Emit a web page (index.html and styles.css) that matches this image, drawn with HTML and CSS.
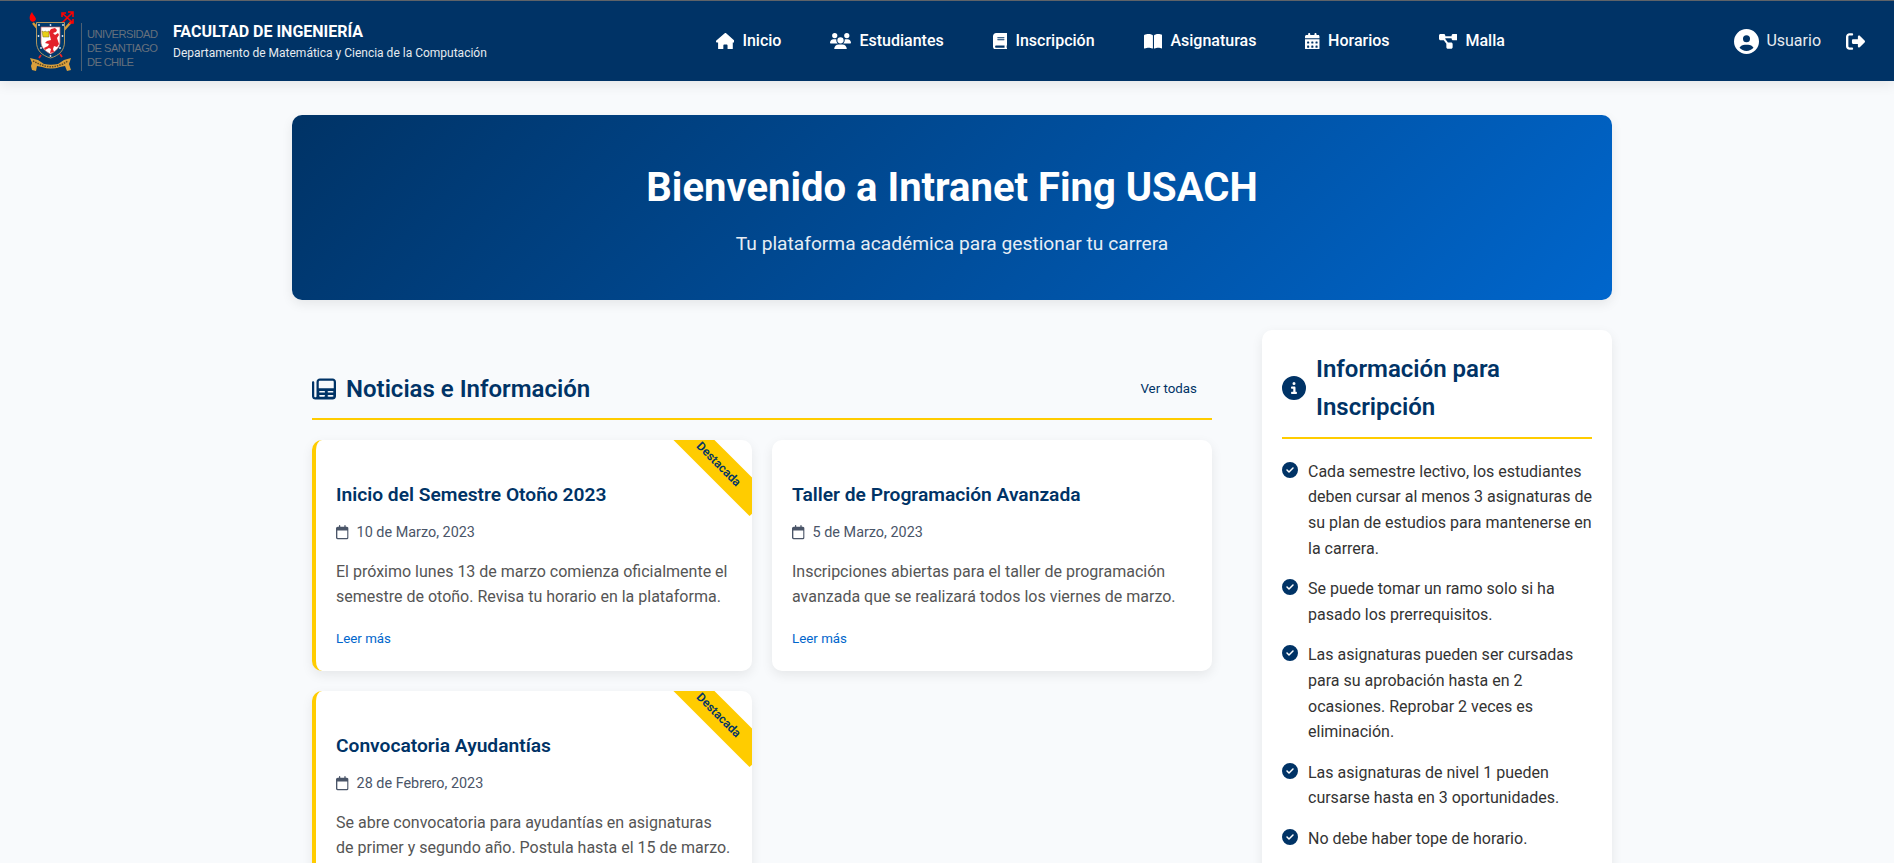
FILE: index.html
```html
<!DOCTYPE html>
<html lang="es">
<head>
<meta charset="utf-8">
<title>Intranet Fing USACH</title>
<link rel="stylesheet" href="styles.css">
</head>
<body>
<svg class="sprite" aria-hidden="true">
  <symbol id="home" viewBox="0 0 576 512"><path d="M575.8 255.5c0 18-15 32.1-32 32.1h-32l.7 160.2c0 2.7-.2 5.4-.5 8.1V472c0 22.1-17.9 40-40 40H392c-22.1 0-40-17.9-40-40V384c0-17.7-14.3-32-32-32H256c-17.7 0-32 14.3-32 32v88c0 22.1-17.9 40-40 40H104c-22.1 0-40-17.9-40-40V287.6H32c-18 0-32-14-32-32.1c0-9 3-17 10-24L266.4 8c7-7 15-8 22-8s15 2 21 7L564.8 231.5c8 7 12 15 11 24z"/></symbol>
  <symbol id="users" viewBox="0 0 640 512"><path d="M144 0a80 80 0 1 1 0 160A80 80 0 1 1 144 0zM512 0a80 80 0 1 1 0 160A80 80 0 1 1 512 0zM0 298.7C0 239.8 47.8 192 106.7 192h42.7c15.9 0 31 3.5 44.6 9.7c-1.3 7.2-1.9 14.7-1.9 22.3c0 38.2 16.8 72.5 43.3 96H21.3C9.6 320 0 310.4 0 298.7zM404.6 320c26.6-23.5 43.3-57.8 43.3-96c0-7.6-.7-15-1.9-22.3c13.6-6.3 28.7-9.7 44.6-9.7h42.7C592.2 192 640 239.8 640 298.7c0 11.8-9.6 21.3-21.3 21.3H404.6zM224 224a96 96 0 1 1 192 0 96 96 0 1 1 -192 0zM128 485.3C128 411.7 187.7 352 261.3 352H378.7C452.3 352 512 411.7 512 485.3c0 14.7-11.9 26.7-26.7 26.7H154.7c-14.7 0-26.7-11.9-26.7-26.7z"/></symbol>
  <symbol id="book" viewBox="0 0 448 512"><path d="M96 0C43 0 0 43 0 96V416c0 53 43 96 96 96H416c17.7 0 32-14.3 32-32s-14.3-32-32-32V384c17.7 0 32-14.3 32-32V32c0-17.7-14.3-32-32-32H96zm0 384H352v64H96c-17.7 0-32-14.3-32-32s14.3-32 32-32zm32-240c0-8.8 7.2-16 16-16H336c8.8 0 16 7.2 16 16s-7.2 16-16 16H144c-8.8 0-16-7.2-16-16zm16 48H336c8.8 0 16 7.2 16 16s-7.2 16-16 16H144c-8.8 0-16-7.2-16-16s7.2-16 16-16z"/></symbol>
  <symbol id="book-open" viewBox="0 0 576 512"><path d="M249.6 471.5c10.8 3.8 22.4-4.1 22.4-15.5V78.6c0-4.2-1.6-8.4-5-11C247.4 52 202.4 32 144 32C93.5 32 46.3 45.3 18.1 56.1C6.8 60.5 0 71.7 0 83.8V454.1c0 11.9 12.8 20.2 24.1 16.5C55.6 460.1 105.5 448 144 448c33.9 0 79 14 105.6 23.5zm76.8 0C353 462 398.1 448 432 448c38.5 0 88.4 12.1 119.9 22.6c11.3 3.8 24.1-4.6 24.1-16.5V83.8c0-12.1-6.8-23.3-18.1-27.6C529.7 45.3 482.5 32 432 32c-58.4 0-103.4 20-123 35.6c-3.3 2.6-5 6.8-5 11V456c0 11.4 11.7 19.3 22.4 15.5z"/></symbol>
  <symbol id="calendar-days" viewBox="0 0 448 512"><path d="M128 0c17.7 0 32 14.3 32 32V64H288V32c0-17.7 14.3-32 32-32s32 14.3 32 32V64h48c26.5 0 48 21.5 48 48v48H0V112C0 85.5 21.5 64 48 64H96V32c0-17.7 14.3-32 32-32z"/><path fill-rule="evenodd" d="M0 192H448V464c0 26.5-21.5 48-48 48H48c-26.5 0-48-21.5-48-48zM80 256q-16 0-16 16v32q0 16 16 16h32q16 0 16-16v-32q0-16-16-16zM208 256q-16 0-16 16v32q0 16 16 16h32q16 0 16-16v-32q0-16-16-16zM336 256q-16 0-16 16v32q0 16 16 16h32q16 0 16-16v-32q0-16-16-16zM80 384q-16 0-16 16v32q0 16 16 16h32q16 0 16-16v-32q0-16-16-16zM208 384q-16 0-16 16v32q0 16 16 16h32q16 0 16-16v-32q0-16-16-16zM336 384q-16 0-16 16v32q0 16 16 16h32q16 0 16-16v-32q0-16-16-16z"/></symbol>
  <symbol id="diagram" viewBox="0 0 576 512"><path d="M0 80C0 53.5 21.5 32 48 32h96c26.5 0 48 21.5 48 48V96H384V80c0-26.5 21.5-48 48-48h96c26.5 0 48 21.5 48 48v96c0 26.5-21.5 48-48 48H432c-26.5 0-48-21.5-48-48V160H192v16c0 1.7-.1 3.4-.3 5L272 288h96c26.5 0 48 21.5 48 48v96c0 26.5-21.5 48-48 48H272c-26.5 0-48-21.5-48-48V336c0-1.7 .1-3.4 .3-5L144 224H48c-26.5 0-48-21.5-48-48V80z"/></symbol>
  <symbol id="user-circle" viewBox="0 0 512 512"><path d="M399 384.2C376.9 345.8 335.4 320 288 320H224c-47.4 0-88.9 25.8-111 64.2c35.2 39.2 86.2 63.8 143 63.8s107.8-24.7 143-63.8zM0 256a256 256 0 1 1 512 0A256 256 0 1 1 0 256zm256 16a72 72 0 1 0 0-144 72 72 0 1 0 0 144z"/></symbol>
  <symbol id="sign-out" viewBox="0 0 512 512"><path d="M377.9 105.9L500.7 228.7c7.2 7.2 11.3 17.1 11.3 27.3s-4.1 20.1-11.3 27.3L377.9 406.1c-6.4 6.4-15 9.9-24 9.9c-18.7 0-33.9-15.2-33.9-33.9l0-62.1-128 0c-17.7 0-32-14.3-32-32l0-64c0-17.7 14.3-32 32-32l128 0 0-62.1c0-18.7 15.2-33.9 33.9-33.9c9 0 17.6 3.6 24 9.9zM160 96L96 96c-17.7 0-32 14.3-32 32l0 256c0 17.7 14.3 32 32 32l64 0c17.7 0 32 14.3 32 32s-14.3 32-32 32l-64 0c-53 0-96-43-96-96L0 128C0 75 43 32 96 32l64 0c17.7 0 32 14.3 32 32s-14.3 32-32 32z"/></symbol>
  <symbol id="newspaper" viewBox="0 0 512 512"><path fill-rule="evenodd" d="M168 32H440c39.800 0 72 32.200 72 72V408c0 39.800-32.200 72-72 72H72c-39.800 0-72-32.200-72-72V112C0 98.700 10.700 88 24 88s24 10.700 24 24V408c0 13.300 10.700 24 24 24s24-10.700 24-24V104c0-39.800 32.200-72 72-72zM168 80c-13.300 0-24 10.700-24 24V240H464V104c0-13.300-10.700-24-24-24zM176 296c-13 0-24 6-24 18s11 18 24 18h82c13 0 22-6 22-18s-9-18-22-18zM354 296c-13 0-22 6-22 18s9 18 22 18h82c13 0 22-6 22-18s-9-18-22-18zM176 382c-13 0-24 6-24 18s11 20 24 20h82c13 0 22-8 22-20s-9-18-22-18zM354 382c-13 0-22 6-22 18s9 20 22 20h82c13 0 22-8 22-20s-9-18-22-18z"/></symbol>
  <symbol id="info" viewBox="0 0 512 512"><path d="M256 512A256 256 0 1 0 256 0a256 256 0 1 0 0 512zM216 336h24V272H216c-13.300 0-24-10.700-24-24s10.700-24 24-24h48c13.300 0 24 10.700 24 24v88h8c13.300 0 24 10.700 24 24s-10.700 24-24 24H216c-13.300 0-24-10.700-24-24s10.700-24 24-24zm40-208a32 32 0 1 1 0 64 32 32 0 1 1 0-64z"/></symbol>
  <symbol id="check" viewBox="0 0 512 512"><path d="M256 512A256 256 0 1 0 256 0a256 256 0 1 0 0 512zM369 209L241 337c-9.400 9.400-24.600 9.400-33.900 0l-64-64c-9.400-9.400-9.400-24.600 0-33.900s24.600-9.400 33.900 0l47 47L335 175c9.400-9.400 24.600-9.400 33.900 0s9.400 24.600 0 33.900z"/></symbol>
  <symbol id="calendar" viewBox="0 0 448 512"><path d="M152 24c0-13.300-10.700-24-24-24s-24 10.700-24 24V64H64C28.700 64 0 92.700 0 128v320c0 35.300 28.700 64 64 64H384c35.300 0 64-28.700 64-64V128c0-35.300-28.700-64-64-64H344V24c0-13.300-10.700-24-24-24s-24 10.700-24 24V64H152V24zM48 192H400V448c0 8.800-7.200 16-16 16H64c-8.800 0-16-7.200-16-16V192z"/></symbol>
</svg>

<header class="topbar">
  <div class="brand">
    <svg class="logo" width="130" height="60" viewBox="0 0 130 60">
      <path d="M5 12l5 6M43 11l-8 9" stroke="#d99a35" stroke-width="2.400"/>
      <path d="M2 9c-1-3 0-5 2-8 1 3 3 4 4 7-1 3-4 4-6 1z" fill="#f00"/>
      <path d="M35 3l9 8M44 2l-9 9M40 1h5v5M34 6V2h4M35 11l-2 1M41 12h4V8" fill="none" stroke="#f00" stroke-width="1.600"/>
      <path d="M8.500 11.500h28V31c0 8-5 13.500-14 16-9-2.500-14-8-14-16z" fill="#003a6c" stroke="#b0965f"/>
      <path d="M13 16h19v15c0 5-3.500 9-9.500 12C16.500 40 13 36 13 31z" fill="#fff" stroke="#c66" stroke-width=".7"/>
      <path d="M14 20l2 1 1-1 2 1 2-1v6h-6z" fill="#e9cf16" stroke="#776a1c" stroke-width=".5"/>
      <path d="M21 21l2-3 4-1 2 2-1 2-3 1 2 2 3-2 1 2-2 3 1 3 1 3-2 3-3-1-1 3 1 3-4 1 1-4-2-1-4 2-1-2 4-2 1-2-4-1 2-2 4-1z" fill="#e3202b"/>
      <g fill="#dcecff"><circle cx="11" cy="14" r=".9"/><circle cx="22.500" cy="14" r=".9"/><circle cx="35" cy="14" r=".9"/><circle cx="10.500" cy="25" r=".9"/><circle cx="34.500" cy="25" r=".9"/><circle cx="13" cy="37" r=".9"/><circle cx="32" cy="37" r=".9"/><circle cx="22.500" cy="45" r=".9"/></g>
      <path d="M11 47l2-3M32 43l2 3" stroke="#e22" stroke-width="1.800"/>
      <path d="M2 47l8 2 6 4c5 1 9 1 14 0l6-4 7-2-2 6 2 6-4 1-2-5-5 1c-6 2-12 2-18 0l-5-1-1 5-4-1-1-4 1-3z" fill="#dba03c"/>
      <path d="M5 50l6 3 6 2c4 1 8 1 12 0l6-2 5-3" fill="none" stroke="#5b4a28" stroke-width="1.500" stroke-dasharray="1.500 1"/>
      <path d="M53.500 12v48" stroke="#4d6073"/>
      <g class="logo-text"><text x="59" y="27" textLength="71">UNIVERSIDAD</text><text x="59" y="41" textLength="71">DE SANTIAGO</text><text x="59" y="55" textLength="47">DE CHILE</text></g>
    </svg>
    <div class="brand-text">
      <div class="faculty">FACULTAD DE INGENIERÍA</div>
      <div class="department">Departamento de Matemática y Ciencia de la Computación</div>
    </div>
  </div>
  <nav class="menu">
    <a><svg class="wide"><use href="#home"/></svg>Inicio</a>
    <a><svg class="widest"><use href="#users"/></svg>Estudiantes</a>
    <a><svg class="narrow"><use href="#book"/></svg>Inscripción</a>
    <a><svg class="wide"><use href="#book-open"/></svg>Asignaturas</a>
    <a><svg class="narrow"><use href="#calendar-days"/></svg>Horarios</a>
    <a><svg class="wide"><use href="#diagram"/></svg>Malla</a>
  </nav>
  <div class="account">
    <svg class="avatar"><use href="#user-circle"/></svg><span>Usuario</span>
    <svg class="exit"><use href="#sign-out"/></svg>
  </div>
</header>

<main class="page">
  <section class="hero">
    <h1>Bienvenido a Intranet Fing USACH</h1>
    <p>Tu plataforma académica para gestionar tu carrera</p>
  </section>
  <div class="columns">
    <section class="news">
      <div class="section-head">
        <h2><svg class="h-icon"><use href="#newspaper"/></svg>Noticias e Información</h2>
        <a class="all">Ver todas</a>
      </div>
      <div class="cards">
        <article class="card featured">
          <span class="ribbon">Destacada</span>
          <h3>Inicio del Semestre Otoño 2023</h3>
          <div class="date"><svg><use href="#calendar"/></svg>10 de Marzo, 2023</div>
          <p>El próximo lunes 13 de marzo comienza oficialmente el semestre de otoño. Revisa tu horario en la plataforma.</p>
          <a class="more">Leer más</a>
        </article>
        <article class="card">
          <h3>Taller de Programación Avanzada</h3>
          <div class="date"><svg><use href="#calendar"/></svg>5 de Marzo, 2023</div>
          <p>Inscripciones abiertas para el taller de programación avanzada que se realizará todos los viernes de marzo.</p>
          <a class="more">Leer más</a>
        </article>
        <article class="card featured">
          <span class="ribbon">Destacada</span>
          <h3>Convocatoria Ayudantías</h3>
          <div class="date"><svg><use href="#calendar"/></svg>28 de Febrero, 2023</div>
          <p>Se abre convocatoria para ayudantías en asignaturas de primer y segundo año. Postula hasta el 15 de marzo.</p>
        </article>
      </div>
    </section>
    <aside class="info">
      <h2><svg class="h-icon"><use href="#info"/></svg><span>Información para Inscripción</span></h2>
      <ul>
        <li><svg><use href="#check"/></svg><span>Cada semestre lectivo, los estudiantes deben cursar al menos 3 asignaturas de su plan de estudios para mantenerse en la carrera.</span></li>
        <li><svg><use href="#check"/></svg><span>Se puede tomar un ramo solo si ha pasado los prerrequisitos.</span></li>
        <li><svg><use href="#check"/></svg><span>Las asignaturas pueden ser cursadas para su aprobación hasta en 2 ocasiones. Reprobar 2 veces es eliminación.</span></li>
        <li><svg><use href="#check"/></svg><span>Las asignaturas de nivel 1 pueden cursarse hasta en 3 oportunidades.</span></li>
        <li><svg><use href="#check"/></svg><span>No debe haber tope de horario.</span></li>
      </ul>
    </aside>
  </div>
</main>
</body>
</html>
```
FILE: styles.css
```css
* { box-sizing: border-box; margin: 0; padding: 0; }
html, body { height: 863px; overflow: hidden; }
body { background: #f8fafc; color: #333; font-family: Roboto, "Liberation Sans", sans-serif; font-size: 16px; line-height: 1.6; }
svg { fill: currentColor; flex: none; }
.sprite { position: absolute; width: 0; height: 0; }

.topbar { position: relative; display: grid; grid-template-columns: 687.5px 1fr auto; align-items: center; height: 81px; padding: 0 29px 0 28px; background: #003366; border-top: 1px solid #5f6368; color: #fff; box-shadow: 0 4px 12px rgba(0, 0, 0, .08); }
.brand { display: flex; align-items: center; gap: 15px; }
.logo-text { fill: #66707c; font: 11.2px "Liberation Sans", sans-serif; }
.brand-text { padding-top: 2px; color: #fff; }
.faculty { font-size: 16px; font-weight: 700; line-height: 22px; }
.department { font-size: 12px; line-height: 20px; opacity: .9; }
.menu { display: flex; gap: 49px; font-weight: 500; }
.menu a { display: flex; align-items: center; gap: 8px; }
.menu svg { height: 16.8px; }
.wide { width: 18.9px; }
.widest { width: 21px; }
.narrow { width: 14.7px; }
.account { display: flex; align-items: center; gap: 7px; }
.account span { opacity: .9; }
.avatar { width: 25px; height: 25px; }
.exit { width: 19px; height: 19px; margin-left: 18px; }

.page { width: 1320px; margin: 34px 0 0 292px; }
.hero { height: 185px; padding: 41px 40px 0; border-radius: 10px; background: linear-gradient(135deg, #003366 0%, #0066cc 100%); box-shadow: 0 4px 12px rgba(0, 0, 0, .08); color: #fff; text-align: center; }
.hero h1 { margin-bottom: 8px; font-size: 40px; font-weight: 700; line-height: 64px; }
.hero p { font-size: 19.2px; line-height: 31px; opacity: .9; }
.columns { display: grid; grid-template-columns: 1fr 350px; gap: 30px; margin-top: 30px; }
.news { padding: 0 20px; }
.section-head { display: flex; align-items: center; justify-content: space-between; height: 90px; padding: 30px 15px 0 0; border-bottom: 2px solid #ffcc00; }
h2 { display: flex; align-items: center; gap: 10px; color: #003366; font-size: 24px; font-weight: 600; }
.h-icon { width: 24px; height: 24px; }
.all { color: #003366; font-size: 13.33px; }
.cards { display: grid; grid-template-columns: 1fr 1fr; gap: 20px; margin-top: 20px; }
.card { position: relative; height: 231px; padding: 40px 20px 0; overflow: hidden; border-radius: 10px; background: #fff; box-shadow: 0 4px 12px rgba(0, 0, 0, .08); }
.featured { border-left: 4px solid #ffcc00; }
.card h3 { color: #003366; font-size: 19.2px; font-weight: 600; line-height: 30px; }
.date { display: flex; align-items: center; gap: 8px; margin-top: 11px; color: #4a5568; font-size: 14.4px; line-height: 23px; }
.date svg { width: 12.6px; height: 14.4px; }
.card p { margin: 14.6px 0 18px; color: #555; line-height: 25.6px; }
.more { display: block; color: #0066cc; font-size: 13.33px; line-height: 22px; }
.ribbon { position: absolute; top: 10px; right: -25px; width: 117px; height: 28.8px; transform: rotate(45deg); background: #ffcc00; color: #003366; font-size: 12px; font-weight: 600; line-height: 28.8px; text-align: center; }

.info { height: 700px; padding: 20px; border-radius: 10px; background: #fff; box-shadow: 0 4px 12px rgba(0, 0, 0, .08); }
.info h2 { padding-bottom: 10px; border-bottom: 2px solid #ffcc00; }
.info ul { margin-top: 20px; list-style: none; }
.info li { display: flex; gap: 10px; margin-bottom: 15px; }
.info li svg { width: 16px; height: 16px; margin-top: 3px; color: #003366; }
```
